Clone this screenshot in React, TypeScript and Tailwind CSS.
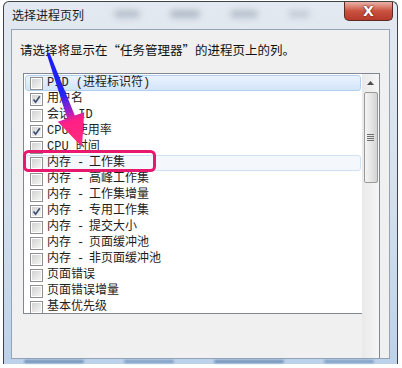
import { Fragment } from "react";

const items = [
  { label: "PID (进程标识符)", checked: false, state: "selected" },
  { label: "用户名", checked: true },
  { label: "会话 ID", checked: false },
  { label: "CPU 使用率", checked: true },
  { label: "CPU 时间", checked: false },
  { label: "内存 - 工作集", checked: false, state: "hover" },
  { label: "内存 - 高峰工作集", checked: false },
  { label: "内存 - 工作集增量", checked: false },
  { label: "内存 - 专用工作集", checked: true },
  { label: "内存 - 提交大小", checked: false },
  { label: "内存 - 页面缓冲池", checked: false },
  { label: "内存 - 非页面缓冲池", checked: false },
  { label: "页面错误", checked: false },
  { label: "页面错误增量", checked: false },
  { label: "基本优先级", checked: false },
];

const CheckBox = ({ checked }: { checked: boolean }) => (
  <span className="relative flex h-[13px] w-[13px] shrink-0 items-center justify-center border border-[#8f8f8f] bg-white">
    <span className="h-[9px] w-[9px] bg-gradient-to-br from-[#d2d2d2] to-[#f5f5f5]" />
    {checked && (
      <svg className="absolute left-0 top-0" width="11" height="11" viewBox="0 0 11 11">
        <path d="M2.5 5.5 L4.6 8.2 L8.8 2.2" fill="none" stroke="#3b4e74" strokeWidth="1.6" />
      </svg>
    )}
  </span>
);

const App = () => {
  return (
    <div
      className="relative h-[368px] w-[402px] overflow-hidden bg-white text-black"
      style={{ fontFamily: '"Noto Sans CJK SC", "Noto Sans", sans-serif' }}
    >
      <div className="ml-[3px] mt-[1px] flex h-[363px] w-[395px] flex-col rounded-t-[6px] border border-b-0 border-[#3f4347] bg-gradient-to-b from-[#e3e9f0] via-[#d6e1ec] to-[#bcd2ea]">
        {/* title bar */}
        <div className="flex h-[27px] items-start">
          <span className="ml-[8px] mt-[5px] text-[12px] leading-[16px] text-[#1a1a1a]">选择进程页列</span>
          <div className="ml-[30px] mt-[8px] flex gap-[30px]">
            <span className="h-[8px] w-[26px] rounded-full bg-[#9aa6b4] opacity-60 blur-[3px]" />
            <span className="h-[8px] w-[30px] rounded-full bg-[#8f9cac] opacity-60 blur-[3px]" />
            <span className="h-[8px] w-[28px] rounded-full bg-[#9aa6b4] opacity-60 blur-[3px]" />
            <span className="h-[8px] w-[22px] rounded-full bg-[#a7b2bf] opacity-50 blur-[3px]" />
          </div>
          <div className="ml-auto mr-[4px] flex h-[19px] w-[49px] items-center justify-center rounded-b-[5px] border border-t-0 border-[#5e2a24] bg-gradient-to-b from-[#e9b1a8] via-[#c9513f] to-[#b53a2a]">
            <span
              className="text-[14px] font-bold leading-none text-white"
              style={{ fontFamily: '"DejaVu Sans", sans-serif', textShadow: "0 0 2px #5a1a12, 0 0 1px #5a1a12" }}
            >
              X
            </span>
          </div>
        </div>

        {/* client area */}
        <div className="mx-[7px] flex flex-1 flex-col border border-[#94a3b5] bg-[#f0f0f0]">
          <p className="ml-[8px] mt-[12px] text-[12.5px] leading-[16px] text-[#111]">
            请选择将显示在“任务管理器”的进程页上的列。
          </p>
          <div className="ml-[11px] mt-[15px] flex flex-1 items-start">
            <div className="h-[241px] w-[339px] overflow-hidden border border-r-0 border-[#828790] bg-white pl-[1px] pt-[1px]">
              {items.map((item, i) => (
                <div
                  key={i}
                  className={
                    "flex h-[16px] w-[336px] items-center rounded-[3px] border pl-[4px] " +
                    (item.state === "selected"
                      ? "border-[#b2cff0] bg-gradient-to-b from-[#eaf3fd] to-[#d3e5f9]"
                      : item.state === "hover"
                        ? "border-[#cfe1f6] bg-[#f4f8fd]"
                        : "border-transparent")
                  }
                >
                  <CheckBox checked={item.checked} />
                  <span
                    className="ml-[4px] whitespace-pre text-[12px] leading-[14px] text-[#1e1e1e]"
                    style={{ fontFamily: '"Liberation Mono", "Noto Sans CJK SC", monospace' }}
                  >
                    {item.label.split(" - ").map((part, j, arr) => (
                      <Fragment key={j}>
                        {part}
                        {j < arr.length - 1 && <span className="tracking-[-1.2px]"> - </span>}
                      </Fragment>
                    ))}
                  </span>
                </div>
              ))}
            </div>

            {/* scrollbar */}
            <div className="flex h-full w-[18px] flex-col items-center border-r border-t border-[#828790] bg-gradient-to-r from-[#e9e9e9] to-[#f6f6f6]">
              <div className="flex h-[18px] w-full items-center justify-center">
                <svg width="7" height="4" viewBox="0 0 7 4">
                  <path d="M0 4 L3.5 0 L7 4 Z" fill="#4d4d4d" />
                </svg>
              </div>
              <div className="flex h-[91px] w-[14px] flex-col items-center justify-center gap-[1px] rounded-[2px] border border-[#9a9a9a] bg-gradient-to-r from-[#f4f4f4] via-[#e6e6e6] to-[#d3d3d3]">
                <span className="h-[1px] w-[7px] bg-[#6e6e6e]" />
                <span className="h-[1px] w-[7px] bg-[#6e6e6e]" />
                <span className="h-[1px] w-[7px] bg-[#6e6e6e]" />
                <span className="h-[1px] w-[7px] bg-[#6e6e6e]" />
              </div>
            </div>
          </div>
        </div>

        {/* bottom frame */}
        <div className="flex h-[5px] items-center gap-[40px] px-[20px]">
          <span className="h-[3px] w-[60px] rounded-full bg-[#6f8fb5] blur-[1px]" />
          <span className="h-[3px] w-[50px] rounded-full bg-[#7d9cc0] blur-[1px]" />
          <span className="h-[3px] w-[70px] rounded-full bg-[#6f8fb5] blur-[1px]" />
          <span className="h-[3px] w-[50px] rounded-full bg-[#7d9cc0] blur-[1px]" />
        </div>
      </div>

      {/* annotation overlay */}
      <svg
        className="pointer-events-none absolute left-0 top-0"
        width="402"
        height="368"
        viewBox="0 0 402 368"
      >
        <defs>
          <linearGradient id="arrowGrad" gradientUnits="userSpaceOnUse" x1="48" y1="53" x2="82" y2="147">
            <stop offset="0" stopColor="#1a1aff" />
            <stop offset="0.45" stopColor="#2626ee" />
            <stop offset="0.62" stopColor="#a21ec8" />
            <stop offset="0.72" stopColor="#ff1f86" />
            <stop offset="1" stopColor="#ff2a7c" />
          </linearGradient>
        </defs>
        <polygon
          points="46.6,53.5 49.4,52.5 74.8,115.6 84.2,112.2 82,147 57.8,121.8 67.2,118.4"
          fill="url(#arrowGrad)"
        />
        <rect x="24.5" y="151.5" width="130" height="19" rx="4" fill="none" stroke="#e8186f" strokeWidth="3" />
      </svg>
    </div>
  );
};

export default App;
